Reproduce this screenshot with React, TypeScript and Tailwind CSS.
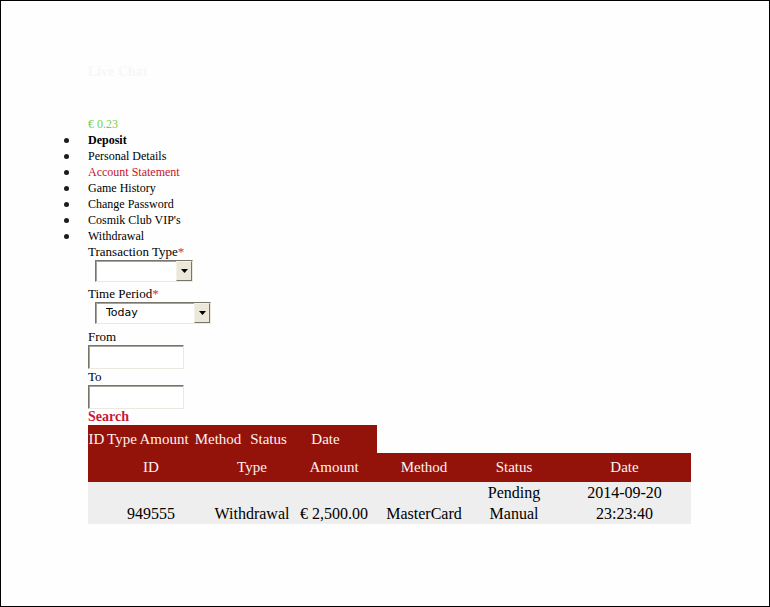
import { ReactNode } from 'react';

const menu = [
  { label: 'Deposit', style: 'font-bold' },
  { label: 'Personal Details', style: '' },
  { label: 'Account Statement', style: 'text-[#c8141e]' },
  { label: 'Game History', style: '' },
  { label: 'Change Password', style: '' },
  { label: "Cosmik Club VIP's", style: '' },
  { label: 'Withdrawal', style: '' },
];

const sunken = 'border border-t-[#77756c] border-l-[#77756c] border-r-[#ece9df] border-b-[#ece9df] bg-white shadow-[inset_1px_1px_0_#a5a39b]';

function Label({ id, required, children }: { id: string; required?: boolean; children: ReactNode }) {
  return (
    <label htmlFor={id} className="block text-[13px] leading-4">
      {children}
      {required && <span className="text-[#c8323c]">*</span>}
    </label>
  );
}

function Select({ id, width, options }: { id: string; width: string; options: string[] }) {
  return (
    <div className={`relative ml-[7px] ${width}`}>
      <select
        id={id}
        className={`block h-[22px] w-full appearance-none rounded-none pl-[10px] font-['DejaVu_Sans',sans-serif] text-[11px] leading-4 outline-none ${sunken}`}
      >
        {options.map((o) => (
          <option key={o}>{o}</option>
        ))}
      </select>
      <span className="pointer-events-none absolute top-px right-px bottom-px flex w-4 items-center justify-center border-t border-r border-b border-l border-t-[#f4f2e8] border-r-[#77756c] border-b-[#77756c] border-l-[#f4f2e8] bg-[#ebe8da]">
        <svg width="7" height="4" viewBox="0 0 7 4" aria-hidden="true">
          <path d="M0 0h7L3.5 4z" fill="#000" />
        </svg>
      </span>
    </div>
  );
}

export default function App() {
  return (
    <main className="min-h-screen border border-black bg-[#fefefe] pt-[63px] pr-[78px] pb-8 pl-[87px] font-['Liberation_Serif',serif] text-black">
      <a href="#chat" className="block text-[14px] leading-4 font-bold text-[#f7f7f7]">
        Live Chat
      </a>
      <p className="mt-9 text-[12px] leading-4 text-[#76d045]">€ 0.23</p>
      <nav>
        <ul className="-ml-6 text-[12px] leading-4">
          {menu.map((m) => (
            <li key={m.label} className="flex items-center">
              <span className="mr-[19px] size-[5px] rounded-full bg-[#1c1c1c]" />
              <a href="#menu" className={m.style}>
                {m.label}
              </a>
            </li>
          ))}
        </ul>
      </nav>

      <form className="flex flex-col items-start">
        <Label id="type" required>Transaction Type</Label>
        <Select id="type" width="w-[98px]" options={['']} />
        <div className="mt-1">
          <Label id="period" required>Time Period</Label>
          <Select id="period" width="w-[116px]" options={['Today']} />
        </div>
        <div className="mt-[5px]">
          <Label id="from">From</Label>
          <input id="from" type="text" className={`block h-6 w-24 px-1 text-[13px] outline-none ${sunken}`} />
        </div>
        <Label id="to">To</Label>
        <input id="to" type="text" className={`block h-6 w-24 px-1 text-[13px] outline-none ${sunken}`} />
        <button type="button" className="text-[14px] leading-4 font-bold text-[#cc1832]">
          Search
        </button>
      </form>

      <table className="w-[289px] table-fixed bg-[#93120a] text-[15px] text-[#fdf3f0]">
        <thead>
          <tr className="h-7">
            <th className="w-[17px] p-0 font-normal">ID</th>
            <th className="w-[34px] p-0 font-normal">Type</th>
            <th className="w-[50px] p-0 font-normal">Amount</th>
            <th className="w-[58px] p-0 font-normal">Method</th>
            <th className="w-[43px] p-0 font-normal">Status</th>
            <th className="py-0 pr-4 pl-0 font-normal">Date</th>
          </tr>
        </thead>
      </table>

      <table className="w-full table-fixed text-center">
        <thead className="bg-[#93120a] text-[15px] text-[#fdf3f0]">
          <tr className="h-[29px]">
            <th className="w-[126px] p-0 font-normal">ID</th>
            <th className="w-[76px] p-0 font-normal">Type</th>
            <th className="w-[88px] p-0 font-normal">Amount</th>
            <th className="w-[92px] p-0 font-normal">Method</th>
            <th className="w-[88px] p-0 font-normal">Status</th>
            <th className="w-[133px] p-0 font-normal">Date</th>
          </tr>
        </thead>
        <tbody className="bg-[#eeeeee] align-bottom text-[16px] leading-[21px]">
          <tr>
            <td className="p-0">949555</td>
            <td className="p-0">Withdrawal</td>
            <td className="p-0">€ 2,500.00</td>
            <td className="p-0">MasterCard</td>
            <td className="p-0">Pending<br />Manual</td>
            <td className="p-0">2014-09-20<br />23:23:40</td>
          </tr>
        </tbody>
      </table>
    </main>
  );
}
